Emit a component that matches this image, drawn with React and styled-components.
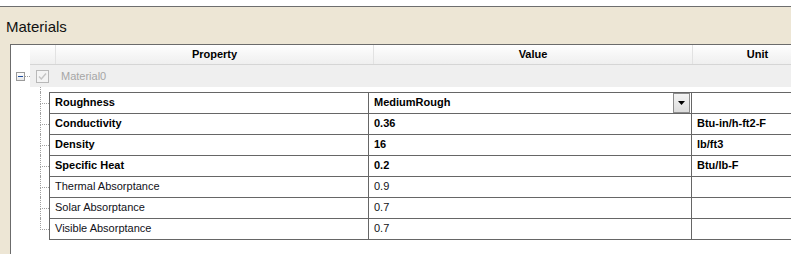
import styled, { createGlobalStyle } from "styled-components";

const GlobalStyle = createGlobalStyle`
  body {
    margin: 0;
    background: #ffffff;
    font-family: "Liberation Sans", Arial, sans-serif;
    overflow: hidden;
  }
`;

const rows = [
  { name: "Roughness", value: "MediumRough", unit: "", bold: true, combo: true },
  { name: "Conductivity", value: "0.36", unit: "Btu-in/h-ft2-F", bold: true },
  { name: "Density", value: "16", unit: "lb/ft3", bold: true },
  { name: "Specific Heat", value: "0.2", unit: "Btu/lb-F", bold: true },
  { name: "Thermal Absorptance", value: "0.9", unit: "" },
  { name: "Solar Absorptance", value: "0.7", unit: "" },
  { name: "Visible Absorptance", value: "0.7", unit: "" },
];

export default function App() {
  return (
    <Page>
      <GlobalStyle />
      <TopStrip />
      <Panel>
        <Title>Materials</Title>
        <Grid>
          <HeaderRow>
            <HeadCorner />
            <HeadCell $w={318}>Property</HeadCell>
            <HeadCell $w={319}>Value</HeadCell>
            <HeadCell $w={130}>Unit</HeadCell>
          </HeaderRow>

          <GroupRow>
            <Expander>
              <ExpBox><Minus /></ExpBox>
              <ExpDots />
            </Expander>
            <GroupBody>
              <CheckBox>
                <svg width="11" height="11" viewBox="0 0 11 11">
                  <path d="M2 5.5 L4.3 8 L9 2.5" fill="none" stroke="#c4c4c4" strokeWidth="1.4" />
                </svg>
              </CheckBox>
              <GroupLabel>Material0</GroupLabel>
            </GroupBody>
          </GroupRow>

          <Spacer />

          {rows.map((r, i) => {
            const last = i === rows.length - 1;
            return (
              <ChildRow key={r.name}>
                <Twig>
                  <TwigTop />
                  <TwigBottom $last={last} />
                </Twig>
                <Cells $last={last}>
                  <Cell $w={319} $bold={r.bold}>{r.name}</Cell>
                  <Cell $w={323} $bold={r.bold} $combo={r.combo}>
                    <span>{r.value}</span>
                    {r.combo && (
                      <ComboButton>
                        <svg width="7" height="4" viewBox="0 0 7 4">
                          <path d="M0 0 H7 L3.5 4 Z" fill="#000" />
                        </svg>
                      </ComboButton>
                    )}
                  </Cell>
                  <Cell $w={140} $bold={r.bold} $noRight>{r.unit}</Cell>
                </Cells>
              </ChildRow>
            );
          })}
        </Grid>
      </Panel>
    </Page>
  );
}

const Page = styled.div`
  width: 791px;
  height: 254px;
  display: flex;
  flex-direction: column;
  overflow: hidden;
`;

const TopStrip = styled.div`
  height: 6px;
  background: #ffffff;
  border-bottom: 1px solid #6e6e6e;
  flex-shrink: 0;
`;

const Panel = styled.div`
  flex: 1;
  background: #ede6d5;
  display: flex;
  flex-direction: column;
  min-height: 0;
`;

const Title = styled.div`
  font-size: 15px;
  line-height: 18px;
  color: #111;
  padding-left: 6px;
  margin-top: 11px;
  margin-bottom: 8px;
`;

const Grid = styled.div`
  margin-left: 10px;
  width: 840px;
  flex: 1;
  background: #ffffff;
  border-top: 1px solid #6b6b6b;
  border-left: 1px solid #6b6b6b;
  display: flex;
  flex-direction: column;
`;

const HeaderRow = styled.div`
  margin-left: 19px;
  height: 19px;
  display: flex;
  background: linear-gradient(#ffffff, #f7f7f7 45%, #efefef);
  border-bottom: 1px solid #d5d5d5;
`;

const HeadCorner = styled.div`
  width: 26px;
  box-sizing: border-box;
  border-right: 1px solid #e2e2e2;
`;

const HeadCell = styled.div`
  width: ${(p) => p.$w}px;
  box-sizing: border-box;
  border-right: 1px solid #e2e2e2;
  font-size: 11px;
  font-weight: bold;
  color: #000;
  text-align: center;
  line-height: 18px;
`;

const GroupRow = styled.div`
  height: 22px;
  display: flex;
`;

const Expander = styled.div`
  width: 19px;
  display: flex;
  align-items: center;
  padding-left: 5px;
  box-sizing: border-box;
`;

const ExpBox = styled.div`
  width: 9px;
  height: 9px;
  box-sizing: border-box;
  border: 1px solid #9a9a9a;
  background: linear-gradient(#ffffff, #e8e8e8);
  display: flex;
  align-items: center;
  justify-content: center;
`;

const Minus = styled.div`
  width: 5px;
  height: 1px;
  background: #1f4fa0;
`;

const ExpDots = styled.div`
  width: 5px;
  border-top: 1px dotted #a0a0a0;
`;

const GroupBody = styled.div`
  flex: 1;
  background: #efefef;
  display: flex;
  align-items: center;
`;

const CheckBox = styled.div`
  width: 13px;
  height: 13px;
  box-sizing: border-box;
  margin-left: 6px;
  border: 1px solid #b8b8b8;
  background: #f4f4f4;
  display: flex;
  align-items: center;
  justify-content: center;
`;

const GroupLabel = styled.span`
  margin-left: 12px;
  font-size: 11px;
  color: #a6a6a6;
`;

const Spacer = styled.div`
  height: 5px;
  margin-left: 29px;
  border-left: 1px dotted #a0a0a0;
`;

const ChildRow = styled.div`
  display: flex;
`;

const Twig = styled.div`
  width: 9px;
  margin-left: 29px;
  display: flex;
  flex-direction: column;
`;

const TwigTop = styled.div`
  height: 11px;
  border-left: 1px dotted #a0a0a0;
  border-bottom: 1px dotted #a0a0a0;
`;

const TwigBottom = styled.div`
  flex: 1;
  border-left: 1px dotted ${(p) => (p.$last ? "transparent" : "#a0a0a0")};
`;

const Cells = styled.div`
  display: flex;
  border-left: 1px solid #666;
  border-top: 1px solid #666;
  border-bottom: ${(p) => (p.$last ? "1px solid #666" : "none")};
`;

const Cell = styled.div`
  width: ${(p) => p.$w}px;
  height: 20px;
  box-sizing: border-box;
  border-right: ${(p) => (p.$noRight ? "none" : "1px solid #666")};
  padding-left: 5px;
  padding-right: 1px;
  padding-bottom: 3px;
  display: flex;
  align-items: center;
  justify-content: space-between;
  font-size: 11px;
  font-weight: ${(p) => (p.$bold ? "bold" : "normal")};
  color: ${(p) => (p.$bold ? "#000" : "#111118")};
  white-space: nowrap;
`;

const ComboButton = styled.div`
  width: 17px;
  height: 20px;
  margin-bottom: -3px;
  box-sizing: border-box;
  border: 1px solid #8c8c8c;
  background: linear-gradient(#f4f4f4, #dcdcdc);
  display: flex;
  align-items: center;
  justify-content: center;
`;
